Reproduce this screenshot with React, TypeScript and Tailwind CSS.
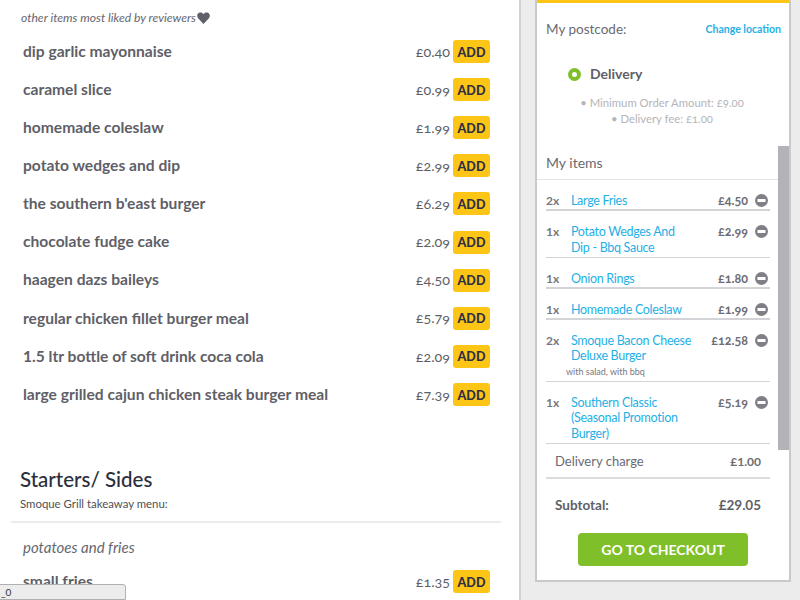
const font = { fontFamily: 'Lato, "Noto Sans", sans-serif' };

const menu: [string, string][] = [
  ["dip garlic mayonnaise", "£0.40"],
  ["caramel slice", "£0.99"],
  ["homemade coleslaw", "£1.99"],
  ["potato wedges and dip", "£2.99"],
  ["the southern b'east burger", "£6.29"],
  ["chocolate fudge cake", "£2.09"],
  ["haagen dazs baileys", "£4.50"],
  ["regular chicken fillet burger meal", "£5.79"],
  ["1.5 ltr bottle of soft drink coca cola", "£2.09"],
  ["large grilled cajun chicken steak burger meal", "£7.39"],
];

function MenuRow({ name, price }: { name: string; price: string }) {
  return (
    <div className="flex h-[38.1px] items-center pl-[23px] pr-[29px]">
      <span className="flex-1 text-[15.6px] font-bold text-[#5f5f68] whitespace-nowrap">{name}</span>
      <span className="mr-[3px] text-[14.3px] text-[#5f5f68] [font-variant-numeric:oldstyle-nums]">{price}</span>
      <AddButton />
    </div>
  );
}

function AddButton() {
  return (
    <span className="flex h-[23px] w-[37px] items-center justify-center rounded-[3px] bg-[#fdc516] pt-[3px] text-[12.5px] font-black text-[#2c2f45]">
      ADD
    </span>
  );
}

function Minus() {
  return (
    <svg width="13" height="13" viewBox="0 0 13 13" className="mt-[1px] mr-[2px] shrink-0">
      <circle cx="6.5" cy="6.5" r="6.5" fill="#807f87" />
      <rect x="2.5" y="5" width="8" height="3" fill="#fff" />
    </svg>
  );
}

function CartRow({
  qty,
  lines,
  price,
  note,
  thick,
}: {
  qty: string;
  lines: string[];
  price: string;
  note?: string;
  thick?: boolean;
}) {
  return (
    <div className={`ml-[9px] mr-[19px] flex border-b-[#d4d4d8] pt-[13px] ${thick ? "border-b-2 pb-[0.5px]" : "border-b pb-[1.5px]"}`}>
      <span className="w-[25px] text-[12px] leading-[15.5px] font-bold text-[#77777f]">{qty}</span>
      <div className="min-w-0 flex-1">
        {lines.map((l) => (
          <div key={l} className="text-[12.5px] leading-[15.5px] tracking-[-0.3px] text-[#1fb0e6] whitespace-nowrap">
            {l}
          </div>
        ))}
        {note && <div className="-ml-[5px] text-[9px] leading-[15.5px] text-[#77777f]">{note}</div>}
      </div>
      <span className="mr-[7px] text-[12.5px] leading-[15.5px] font-bold text-[#6d6d75] [font-variant-numeric:oldstyle-nums]">{price}</span>
      <Minus />
    </div>
  );
}

export default function App() {
  return (
    <div className="relative flex h-[600px] w-[800px] overflow-hidden bg-white" style={font}>
      <main className="h-[600px] w-[521px] shrink-0 overflow-hidden border-r-2 border-[#d2d2d2] bg-white">
        <p className="mt-[10px] flex items-center pl-[21px] text-[12.1px] leading-[15px] italic text-[#66666e]">
          other items most liked by reviewers
          <svg width="13" height="12" viewBox="0 0 24 22" className="ml-[1px]">
            <path d="M12 22 2 11.5C-1 8 0 2 5 .8 8 .2 10.5 1.5 12 4c1.500-2.500 4-3.800 7-3.200 5 1.200 6 7.200 3 10.700Z" fill="#5f5f68" />
          </svg>
        </p>
        <div className="mt-[7.5px]">
          {menu.map(([n, p]) => (
            <MenuRow key={n} name={n} price={p} />
          ))}
        </div>
        <h2 className="mt-[51.5px] pl-[20px] text-[20.5px] leading-[28px] font-medium text-[#2b2e3d]">Starters/ Sides</h2>
        <p className="mt-[4px] pl-[20px] text-[11.4px] leading-[14px] text-[#4f4f57]">Smoque Grill takeaway menu:</p>
        <div className="mt-[10px] ml-[11px] w-[490px] border-b-2 border-[#ececec]" />
        <p className="mt-[14px] pl-[23px] text-[15px] leading-[20px] italic text-[#66666e]">potatoes and fries</p>
        <div className="mt-[6px]">
          <MenuRow name="small fries" price="£1.35" />
        </div>
      </main>

      <aside className="relative h-[600px] w-[279px] min-w-0 shrink-0 bg-[#ececec] pl-[14px] pr-[9px]">
        <div className="relative h-[582px] overflow-hidden border-x-2 border-b-2 border-[#c9c9c9] bg-white">
          <div className="h-[3px] bg-[#fdc516]" />
          <div className="flex items-center justify-between pt-[17px] pl-[9px] pr-[8px]">
            <span className="text-[13.5px] leading-[18px] text-[#6a6a72]">My postcode:</span>
            <span className="text-[10.5px] leading-[18px] font-bold text-[#1fb0e6]">Change location</span>
          </div>
          <div className="mt-[27px] flex items-center pl-[31px]">
            <span className="h-[13px] w-[13px] rounded-full border-[4px] border-[#7fbf2a] bg-white" />
            <span className="ml-[9px] text-[14px] font-bold leading-[18px] text-[#5f5f68]">Delivery</span>
          </div>
          <div className="mt-[12px] w-[250px] text-center text-[11.3px] leading-[16px] text-[#b5b5ba] [font-variant-numeric:oldstyle-nums]">
            <div>• Minimum Order Amount: £9.00</div>
            <div>• Delivery fee: £1.00</div>
          </div>
          <div className="mt-[27px] pl-[9px] text-[14px] leading-[18px] text-[#6a6a72]">My items</div>
          <div className="mt-[7px] border-b border-[#e4e4e4]" />
          <div>
            <CartRow qty="2x" lines={["Large Fries"]} price="£4.50" thick />
            <CartRow qty="1x" lines={["Potato Wedges And", "Dip - Bbq Sauce"]} price="£2.99" />
            <CartRow qty="1x" lines={["Onion Rings"]} price="£1.80" thick />
            <CartRow qty="1x" lines={["Homemade Coleslaw"]} price="£1.99" thick />
            <CartRow qty="2x" lines={["Smoque Bacon Cheese", "Deluxe Burger"]} price="£12.58" note="with salad, with bbq" />
            <CartRow qty="1x" lines={["Southern Classic", "(Seasonal Promotion", "Burger)"]} price="£5.19" />
          </div>
          <div className="ml-[9px] mr-[19px] flex h-[35px] items-center justify-between border-b-2 border-[#dcdcdc] px-[9px] pt-[3px]">
            <span className="text-[13px] text-[#6a6a72]">Delivery charge</span>
            <span className="text-[12px] font-bold text-[#6d6d75]">£1.00</span>
          </div>
          <div className="ml-[9px] mr-[19px] mb-[2px] flex h-[52px] items-center justify-between px-[9px] pt-[1px]">
            <span className="text-[13.5px] font-bold text-[#5f5f68]">Subtotal:</span>
            <span className="text-[13.5px] font-bold text-[#5f5f68]">£29.05</span>
          </div>
          <div className="flex justify-center">
            <span className="flex h-[33px] w-[170px] items-center justify-center rounded-[4px] bg-[#7fbf2a] text-[14px] font-bold text-white">
              GO TO CHECKOUT
            </span>
          </div>
          <div className="absolute right-0 top-[146px] h-[304px] w-[11px] bg-[#b3b2b7]" />
        </div>
      </aside>

      <div className="absolute bottom-0 left-[-1px] flex h-[16px] w-[127px] items-center rounded-tr-[3px] border border-[#b0b0b0] bg-[#ececec] pl-[1px] text-[10px] text-[#333]">
        _0
      </div>
    </div>
  );
}
